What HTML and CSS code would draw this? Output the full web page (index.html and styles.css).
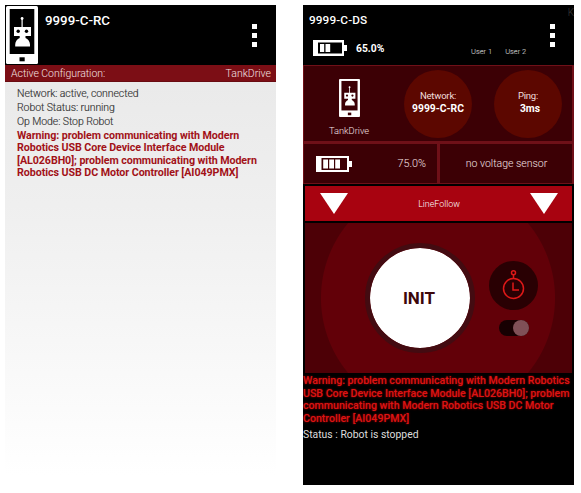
FILE: index.html
```html
<!DOCTYPE html>
<html lang="en">
<head>
<meta charset="utf-8">
<title>Robot Controller and Driver Station</title>
<link rel="stylesheet" href="styles.css">
</head>
<body>
<svg width="0" height="0" class="defs">
  <symbol id="robot" viewBox="0 0 32 58">
    <rect width="32" height="58" rx="1.500" fill="#fff"/>
    <rect class="screen" x="3.700" y="3" width="24.600" height="45"/>
    <rect class="screen" x="13.500" y="51.300" width="5.200" height="4"/>
    <path fill="#fff" d="M15.500 12h1.200v9H25v9h-5.500v2c2.500 1.200 4.500 3.500 4.500 6.500v2H9.200v-2c0-3 2-5.300 4.500-6.500v-2H8v-9h7.500z"/>
    <circle cx="16.100" cy="12.500" r="1.400" fill="#fff"/>
    <circle class="screen" cx="12.200" cy="25.300" r="1.700"/>
    <circle class="screen" cx="20.500" cy="25.300" r="1.700"/>
  </symbol>
</svg>
<main class="devices">
  <section class="phone controller">
    <header class="rc-head">
      <svg class="rc-logo"><use href="#robot"/></svg>
      <h1 class="rc-name">9999-C-RC</h1>
      <div class="dots"><i></i><i></i><i></i></div>
    </header>
    <div class="config"><span class="config-label">Active Configuration:</span><span class="config-name">TankDrive</span></div>
    <div class="rc-body">
      <p>Network: active, connected</p>
      <p>Robot Status: running</p>
      <p>Op Mode: Stop Robot</p>
      <p class="warn">Warning: problem communicating with Modern<br>Robotics USB Core Device Interface Module<br>[AL026BH0]; problem communicating with Modern<br>Robotics USB DC Motor Controller [AI049PMX]</p>
    </div>
  </section>
  <section class="phone station">
    <header class="ds-head">
      <div class="ds-left">
        <h1 class="ds-name">9999-C-DS</h1>
        <div class="ds-power">
          <svg class="battery" width="34" height="16" viewBox="0 0 34 16"><path fill="#fff" d="M0 0h31v5h3v6h-3v5H0z"/><path fill="#000" d="M5 2.500h24v11H5z"/><path fill="#fff" d="M7 4h4.200v8H7zM12.500 4h4.700v8h-4.700z"/></svg>
          <span>65.0%</span>
        </div>
      </div>
      <div class="users"><span>User 1</span><span>User 2</span></div>
      <div class="dots"><i></i><i></i><i></i></div>
      <span class="corner">K</span>
    </header>
    <div class="info">
      <div class="info-top">
        <div class="robot"><svg class="ds-logo"><use href="#robot"/></svg><span>TankDrive</span></div>
        <div class="disc network"><span>Network:</span><b>9999-C-RC</b></div>
        <div class="disc ping"><span>Ping:</span><b>3ms</b></div>
      </div>
      <div class="info-bottom">
        <div class="cell volts">
          <svg width="36" height="16" viewBox="0 0 36 16"><path fill="#fff" d="M0 0h33v5h3v6h-3v5H0z"/><path fill="#3c0005" d="M5.500 2h25.500v12H5.500z"/><path fill="#fff" d="M7.200 3.500h4.800v9H7.200zM13.200 3.500h4.800v9h-4.800zM19.200 3.500H24v9h-4.800z"/></svg>
          <span>75.0%</span>
        </div>
        <div class="cell sensor">no voltage sensor</div>
      </div>
    </div>
    <div class="modes">
      <svg width="28" height="21" viewBox="0 0 28 21"><path d="M0 0h28L14 21z" fill="#fff"/></svg>
      <span>LineFollow</span>
      <svg width="28" height="21" viewBox="0 0 28 21"><path d="M0 0h28L14 21z" fill="#fff"/></svg>
    </div>
    <div class="stage">
      <button class="init">INIT</button>
      <div class="timer">
        <svg width="49" height="49" viewBox="0 0 49 49"><circle cx="24.500" cy="24.500" r="24.500" fill="#290003"/><g fill="none" stroke="#df1818" stroke-width="1.500"><circle cx="24.500" cy="27.500" r="10"/><circle cx="24.500" cy="11.700" r="2"/><path d="M24.500 13.700v3.800M24 21.500v7.500h6"/></g></svg>
        <div class="toggle"><i></i></div>
      </div>
    </div>
    <p class="ds-warn">Warning: problem communicating with Modern Robotics<br>USB Core Device Interface Module [AL026BH0]; problem<br>communicating with Modern Robotics USB DC Motor<br>Controller [AI049PMX]</p>
    <p class="status">Status : Robot is stopped</p>
  </section>
</main>
</body>
</html>
```
FILE: styles.css
```css
* { box-sizing: border-box; }
body { margin: 0; background: #fff; font-family: Roboto, "Liberation Sans", sans-serif; }
h1, p { margin: 0; white-space: nowrap; }
.defs { position: absolute; }
.screen { fill: var(--screen); }
.devices { display: flex; gap: 27px; padding: 5px 0 0 5px; }
.phone { width: 271px; height: 480px; overflow: hidden; flex: none; }
.controller { background: linear-gradient(#eaeaea 80px, #efefef 200px, #fff 470px); }
.rc-head { display: flex; height: 60px; background: #000; color: #fff; position: relative; }
.rc-logo { width: 32px; height: 58px; margin: 1px 0 0 1px; --screen: #000; }
.rc-name { font-size: 13.300px; font-weight: 500; line-height: 16px; margin: 8px 0 0 7px; }
.dots { margin: 19px 19px 0 auto; display: grid; gap: 4px; align-content: start; }
.dots i { width: 5px; height: 5px; background: #fff; }
.config { display: flex; justify-content: space-between; align-items: center; height: 17px; padding: 0 5px 0 6px; background: #7c0e15; color: #f4e2e3; font-size: 10.500px; font-weight: 300; border-bottom: 1px solid #690b11; }
.config-label { letter-spacing: -0.05px; }
.rc-body { padding: 5px 12px; color: #333; font-size: 10.500px; line-height: 14.200px; font-weight: 300; }
.rc-body p { letter-spacing: -0.08px; -webkit-text-stroke: 0.15px; }
.rc-body .warn { font-size: 10.700px; line-height: 12.500px; font-weight: 700; color: #a21218; letter-spacing: -0.07px; -webkit-text-stroke: 0; }
.station { background: #000; color: #fff; }
.ds-head { display: flex; height: 60px; position: relative; }
.ds-left { width: 130px; padding: 7px 0 0 6px; }
.ds-name { font-size: 11.800px; font-weight: 500; line-height: 16px; letter-spacing: 0.1px; }
.ds-power { display: flex; align-items: center; margin-top: 12px; font-size: 10.300px; font-weight: 700; gap: 9px; padding-left: 4px; }
.users { display: flex; gap: 13px; font-size: 7.500px; font-weight: 300; color: #eee; padding: 42px 0 0 38px; white-space: nowrap; }
.corner { position: absolute; right: 0; top: 2px; font-size: 10px; color: #383838; font-weight: 300; }
.info { height: 119px; padding: 1px 2px 1px 1px; background: #6f1018; display: grid; grid-template-rows: 75px 39px; gap: 3px; }
.info-top { background: #3c0005; display: flex; padding: 4px 10px 0 25px; }
.robot { width: 40px; display: flex; flex-direction: column; align-items: center; font-size: 9.300px; font-weight: 300; line-height: 12px; color: #f4e2e3; padding-top: 9px; }
.ds-logo { width: 21px; height: 38px; margin-bottom: 8px; --screen: #3c0005; }
.disc { width: 68px; height: 68px; border-radius: 50%; background: #5c0700; display: flex; flex-direction: column; align-items: center; font-size: 9.500px; line-height: 13px; padding-top: 19px; color: #f1dedd; }
.disc span { letter-spacing: -0.2px; }
.disc b { font-size: 10.300px; font-weight: 700; color: #fff; white-space: nowrap; }
.network { margin-left: 35px; }
.ping { margin-left: 22px; }
.ping b { margin-left: 4px; }
.info-bottom { display: grid; grid-template-columns: 133px 1fr; gap: 3px; }
.cell { background: #3c0005; display: flex; align-items: center; font-size: 10.800px; color: #f4e2e3; font-weight: 300; white-space: nowrap; }
.volts { justify-content: space-between; padding: 0 11px 0 12px; }
.sensor { justify-content: center; padding-left: 1px; font-size: 10.500px; }
.modes { display: flex; align-items: center; justify-content: space-between; height: 35px; margin: 2px 2px 0; padding: 0 14px 0 15px; background: #a80310; font-size: 8.900px; font-weight: 300; }
.stage { display: flex; height: 150px; margin: 2px 2px 0; padding: 20px 0 0 60px; background: radial-gradient(circle at 133px 75px, #620008 116.500px, #4d0006 117.500px); }
.init { width: 110px; height: 110px; border: 5px solid #430b11; border-radius: 50%; background: #fff; background-clip: padding-box; padding: 0 2px 0 0; color: #3d070b; font: 700 17px Roboto, sans-serif; }
.timer { width: 49px; margin: 18px 0 0 14px; display: flex; flex-direction: column; align-items: center; }
.timer svg { display: block; flex: none; }
.toggle { width: 30px; height: 16px; border-radius: 8px; background: #170002; display: flex; justify-content: flex-end; margin-top: 10px; }
.toggle i { width: 16px; height: 16px; border-radius: 50%; background: #805057; }
.ds-warn { margin-top: 2px; font-size: 10.650px; line-height: 12.500px; font-weight: 500; color: #dc1414; letter-spacing: -0.02px; text-shadow: 0 0 2px #b00000; }
.status { margin-top: 3px; font-size: 10.400px; line-height: 14px; color: #ddd; }
```
